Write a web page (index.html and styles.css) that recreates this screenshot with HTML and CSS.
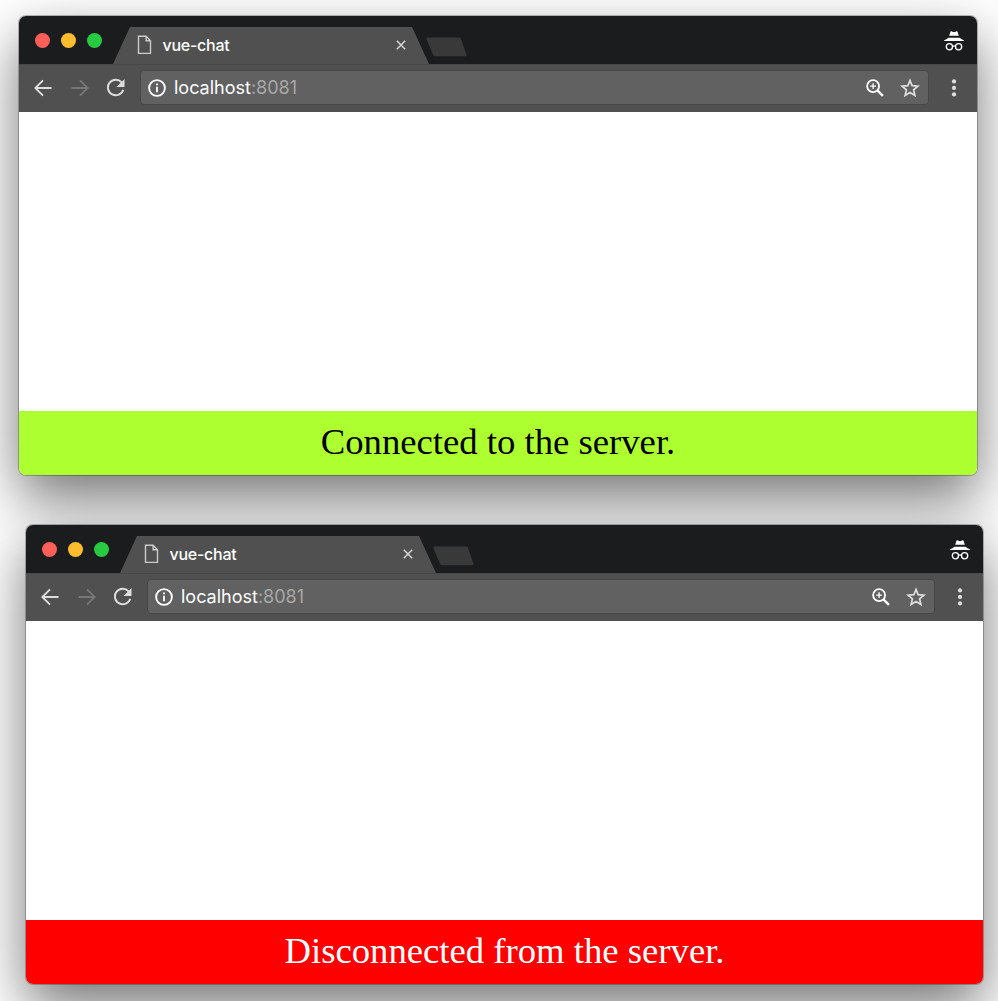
FILE: index.html
```
<!DOCTYPE html>
<html lang="en">
<head>
<meta charset="utf-8">
<title>vue-chat</title>
<link rel="stylesheet" href="styles.css">
</head>
<body>
<svg class="symbols" aria-hidden="true">
  <symbol id="page" viewBox="0 0 14 20"><path d="M1 1.2h7.6L13 5.8v12.6H1z M8.6 1.2v4.6H13" fill="none" stroke="currentColor" stroke-width="1.4"/></symbol>
  <symbol id="close" viewBox="0 0 10 10"><path d="M.8.8l8.4 8.4M9.2.8L.8 9.2" fill="none" stroke="currentColor" stroke-width="1.5"/></symbol>
  <symbol id="incognito" viewBox="0 0 20 20"><path d="M6.5 0.5Q7.2.1 8 .6 10 1.6 12 .6q.8-.5 1.5-.1L14.8 4.7H5.2z M.2 9.3Q2.5 8.5 4.4 6.8h11.2Q17.5 8.5 19.8 9.3v.6H.2z" fill="currentColor"/><path d="M8.5 15.4q1.5-.9 3 0" fill="none" stroke="currentColor" stroke-width="1.2"/><circle cx="5.4" cy="15.8" r="3.1" fill="none" stroke="currentColor" stroke-width="1.3"/><circle cx="14.6" cy="15.8" r="3.1" fill="none" stroke="currentColor" stroke-width="1.3"/></symbol>
  <symbol id="back" viewBox="0 0 18 18"><path d="M17.5 9H1.5M9 1.3L1.3 9 9 16.7" fill="none" stroke="currentColor" stroke-width="1.9"/></symbol>
  <symbol id="reload" viewBox="0 0 20 20"><path d="M16 4.4A8 8 0 1 0 17.7 12" fill="none" stroke="currentColor" stroke-width="2"/><path d="M19 1v8.2h-8.2z" fill="currentColor"/></symbol>
  <symbol id="info" viewBox="0 0 18 18"><circle cx="9" cy="9" r="7.9" fill="none" stroke="currentColor" stroke-width="1.9"/><path d="M8.1 4.5h1.8v1.8H8.1z M8.1 7.8h1.8v5.4H8.1z" fill="currentColor"/></symbol>
  <symbol id="magnify" viewBox="0 0 18 18"><circle cx="7.1" cy="7.1" r="6" fill="none" stroke="currentColor" stroke-width="1.8"/><path d="M11.4 11.4l5.5 5.5" stroke="currentColor" stroke-width="2.4"/><path d="M7.1 4.2v5.8M4.2 7.1H10" stroke="currentColor" stroke-width="1.3"/></symbol>
  <symbol id="star" viewBox="0 0 20 20"><path d="M10 2.4l2.1 5.2 5.9.5-4.4 3.8 1.3 5.6L10 14.6l-4.9 2.9 1.3-5.6L2 8.1l5.9-.5z" fill="none" stroke="currentColor" stroke-width="1.7"/></symbol>
  <symbol id="more" viewBox="0 0 6 18"><g fill="currentColor"><circle cx="3" cy="2.4" r="2.1"/><circle cx="3" cy="8.9" r="2.1"/><circle cx="3" cy="15.4" r="2.1"/></g></symbol>
</svg>
<main class="windows">
  <section class="window">
    <header class="titlebar">
      <div class="lights"><i class="light red"></i><i class="light yellow"></i><i class="light green"></i></div>
      <div class="tab">
        <svg class="page"><use href="#page"/></svg>
        <span class="tab-title">vue-chat</span>
        <svg class="close"><use href="#close"/></svg>
      </div>
      <svg class="new-tab" viewBox="0 0 42 20"><path d="M2 .5h31.5q1.2 0 1.8 1.1L41 17.8q.4 1.5-1 1.5H10q-1.6 0-2.3-1.4L.8 2Q.4.5 2 .5z"/></svg>
      <svg class="incognito"><use href="#incognito"/></svg>
    </header>
    <nav class="toolbar">
      <svg class="arrow"><use href="#back"/></svg>
      <svg class="arrow forward"><use href="#back"/></svg>
      <svg class="reload"><use href="#reload"/></svg>
      <div class="address">
        <svg class="info"><use href="#info"/></svg>
        <span class="url">localhost<span class="port">:8081</span></span>
        <svg class="magnify"><use href="#magnify"/></svg>
        <svg class="star"><use href="#star"/></svg>
      </div>
      <svg class="more"><use href="#more"/></svg>
    </nav>
    <div class="content"></div>
    <footer class="status connected">Connected to the server.</footer>
  </section>
  <section class="window second">
    <header class="titlebar">
      <div class="lights"><i class="light red"></i><i class="light yellow"></i><i class="light green"></i></div>
      <div class="tab">
        <svg class="page"><use href="#page"/></svg>
        <span class="tab-title">vue-chat</span>
        <svg class="close"><use href="#close"/></svg>
      </div>
      <svg class="new-tab" viewBox="0 0 42 20"><path d="M2 .5h31.5q1.2 0 1.8 1.1L41 17.8q.4 1.5-1 1.5H10q-1.6 0-2.3-1.4L.8 2Q.4.5 2 .5z"/></svg>
      <svg class="incognito"><use href="#incognito"/></svg>
    </header>
    <nav class="toolbar">
      <svg class="arrow"><use href="#back"/></svg>
      <svg class="arrow forward"><use href="#back"/></svg>
      <svg class="reload"><use href="#reload"/></svg>
      <div class="address">
        <svg class="info"><use href="#info"/></svg>
        <span class="url">localhost<span class="port">:8081</span></span>
        <svg class="magnify"><use href="#magnify"/></svg>
        <svg class="star"><use href="#star"/></svg>
      </div>
      <svg class="more"><use href="#more"/></svg>
    </nav>
    <div class="content"></div>
    <footer class="status disconnected">Disconnected from the server.</footer>
  </section>
</main>
</body>
</html>
```
FILE: styles.css
```
* { box-sizing: border-box; }
body { margin: 0; background: #fff; font-family: Inter, sans-serif; }
svg { display: block; flex: none; }
.symbols { display: none; }
.windows {
  height: 1001px;
  overflow: hidden;
  padding: 16px 15px 0 19px;
  display: flex;
  flex-direction: column;
  gap: 50px;
  isolation: isolate;
}
.window {
  position: relative;
  width: 958px;
  height: 459px;
  flex: none;
  display: flex;
  flex-direction: column;
  border-radius: 7px;
}
.window.second { width: 957px; margin-left: 7px; }
.window::before {
  content: "";
  position: absolute;
  inset: 0;
  z-index: -1;
  border-radius: 7px;
  box-shadow: 0 0 0 1px rgba(0, 0, 0, .25), 0 23px 56px rgba(0, 0, 0, .55);
}
.titlebar {
  height: 48px;
  flex: none;
  display: flex;
  align-items: flex-start;
  padding-right: 13.5px;
  background: #1b1c1e;
  border-radius: 7px 7px 0 0;
}
.lights { display: flex; gap: 10.5px; padding: 16.5px 0 0 15.5px; width: 94px; }
.light { width: 15.5px; height: 15.5px; border-radius: 50%; flex: none; }
.red { background: #ff5f57; }
.yellow { background: #ffbd2e; }
.green { background: #28ca41; }
.tab {
  width: 316px;
  height: 37px;
  margin-top: 11px;
  padding: 0 23px 1px 24px;
  display: flex;
  align-items: center;
  background: #505050;
  color: #fff;
  clip-path: polygon(17px 0, 299px 0, 316px 100%, 0 100%);
}
.page { width: 15px; height: 20px; color: #cbcbcb; }
.tab-title { margin-left: 10.5px; font-size: 16px; font-weight: 500; line-height: 20px; flex: 1; letter-spacing: -.25px; }
.close { width: 10px; height: 10px; color: #d5d5d5; }
.new-tab { width: 43px; height: 20px; margin: 21px 0 0 -4px; fill: #393939; }
.incognito { width: 20px; height: 20px; margin: 14.5px 0 0 auto; color: #fff; }
.toolbar {
  height: 48px;
  flex: none;
  display: flex;
  align-items: center;
  padding: 0 20.5px 2px 14.5px;
  background: #505050;
  border-top: 1px solid #484848;
  color: #dedede;
}
.arrow { width: 18px; height: 18px; }
.forward { transform: scaleX(-1); margin-left: 19px; color: #777; }
.reload { width: 19.5px; height: 19.5px; margin-left: 17.5px; }
.address {
  height: 35px;
  flex: 1;
  margin: 0 21.5px 0 14.5px;
  padding: 0 8px 0 7px;
  display: flex;
  align-items: center;
  border: 1px solid #474747;
  border-radius: 4px;
  background: #616161;
  color: #fff;
}
.info { width: 18px; height: 18px; }
.url { margin-left: 8px; flex: 1; font-size: 18px; line-height: 24px; }
.port { color: #a8a8a8; }
.magnify { width: 18px; height: 18px; }
.star { width: 20px; height: 20px; margin-left: 16px; color: #dedede; }
.more { width: 6px; height: 18px; }
.content { height: 299px; flex: none; background: #fff; }
.status {
  height: 64px;
  flex: none;
  text-align: center;
  font: 36.7px/62px "Liberation Serif", serif;
  border-radius: 0 0 7px 7px;
}
.connected { background: #adff2f; color: #000; }
.disconnected { background: #f00; color: #fff; }
```
